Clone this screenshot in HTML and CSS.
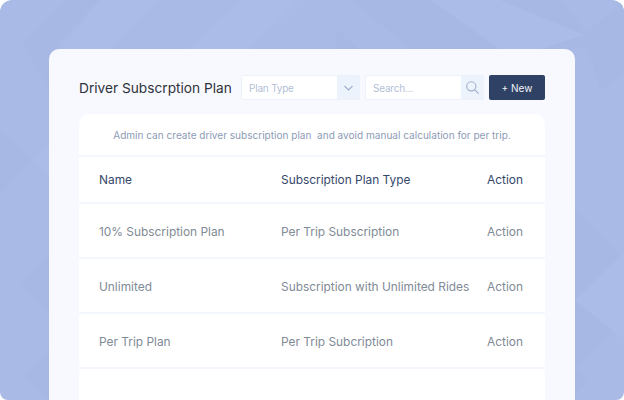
FILE: index.html
```html
<!DOCTYPE html>
<html lang="en">
<head>
<meta charset="utf-8">
<title>Driver Subscription Plan</title>
<link rel="stylesheet" href="styles.css">
</head>
<body>
<div class="page">
  <svg class="pattern" width="624" height="400" viewBox="0 0 624 400" aria-hidden="true">
    <g class="dark">
      <polygon points="23,43 66,0 100,0 57,43 100,86 66,120"/>
      <polygon points="352,0 430,0 500,49 410,49"/>
      <polygon points="500,0 560,0 600,49 545,49"/>
      <polygon points="335,49 337,30 358,49"/>
      <polygon points="584,35 624,0 624,75 600,90"/>
      <polygon points="620,255 575,210 575,300"/>
      <polygon points="614,330 575,290 575,370"/>
      <polygon points="588,382 575,368 575,396"/>
      <polygon points="20,284 49,255 49,313"/>
      <polygon points="23,376 49,350 49,400"/>
      <polygon points="0,130 33,160 0,195"/>
    </g>
    <g class="light">
      <polygon points="100,0 160,0 110,49 60,49"/>
      <polygon points="240,0 300,0 250,49 190,49"/>
      <polygon points="430,0 500,0 584,35 540,49 500,49"/>
      <polygon points="33,160 49,145 49,176"/>
      <polygon points="575,300 624,255 624,340"/>
    </g>
  </svg>
  <main class="card">
    <header class="toolbar">
      <h1 class="title">Driver Subscrption Plan</h1>
      <div class="field">
        <span class="field-text">Plan Type</span>
        <span class="addon">
          <svg width="9" height="6" viewBox="0 0 9 6"><path d="M.5 1l4 4 4-4" class="icon"/></svg>
        </span>
      </div>
      <div class="field">
        <span class="field-text">Search...</span>
        <span class="addon">
          <svg width="13" height="13" viewBox="0 0 13 13"><circle cx="5.3" cy="5.3" r="4.6" class="icon"/><path d="M8.6 8.6l4 4" class="icon"/></svg>
        </span>
      </div>
      <button class="new-btn" type="button">+ New</button>
    </header>
    <section class="panel">
      <p class="note">Admin can create driver subscription plan&nbsp; and avoid manual calculation for per trip.</p>
      <div class="row head">
        <span>Name</span><span>Subscription Plan Type</span><span>Action</span>
      </div>
      <div class="row">
        <span>10% Subscription Plan</span><span>Per Trip Subscription</span><span>Action</span>
      </div>
      <div class="row">
        <span>Unlimited</span><span>Subscription with Unlimited Rides</span><span>Action</span>
      </div>
      <div class="row">
        <span>Per Trip Plan</span><span>Per Trip Subcription</span><span>Action</span>
      </div>
    </section>
  </main>
</div>
</body>
</html>
```

FILE: styles.css
```css
* { box-sizing: border-box; }
html, body { margin: 0; background: #fff; }
body { font-family: "Inter", "Liberation Sans", sans-serif; }
.page {
  position: relative;
  width: 624px;
  height: 400px;
  overflow: hidden;
  background: #a9bae6;
  border-radius: 12px 12px 8px 8px;
  padding: 49px 49px 0;
}
.pattern { position: absolute; left: 0; top: 0; }
.dark polygon { fill: #a7b8e4; }
.light polygon { fill: #abbce8; }
.card {
  position: relative;
  width: 526px;
  height: 351px;
  background: #f7f9fe;
  border-radius: 10px 10px 0 0;
  padding: 26px 30px 0;
}
.toolbar { display: flex; align-items: center; height: 25px; }
.title {
  margin: 0 9px 0 0;
  width: 153px;
  font-size: 13.7px;
  font-weight: 400;
  color: #2f333b;
  white-space: nowrap;
}
.field {
  display: flex;
  width: 119px;
  height: 25px;
  margin-right: 5px;
  background: #fff;
  border: 1px solid #edf1fa;
  border-radius: 2px;
}
.field-text {
  flex: 1;
  padding-left: 7px;
  font-size: 10px;
  line-height: 24px;
  letter-spacing: -0.2px;
  color: #b3bfd8;
}
.addon {
  display: flex;
  align-items: center;
  justify-content: center;
  width: 22px;
  background: #edf3fd;
}
.icon { fill: none; stroke: #9fb0cb; stroke-width: 1.1; }
.new-btn {
  width: 56px;
  height: 25px;
  padding: 0;
  border: 0;
  border-radius: 2px;
  background: #2f4265;
  color: #eef1f7;
  font-family: inherit;
  font-size: 10px;
}
.panel {
  margin-top: 14px;
  height: 286px;
  background: #fff;
  border-radius: 10px 10px 0 0;
}
.note {
  margin: 0;
  height: 43px;
  border-bottom: 2px solid #f3f6fc;
  font-size: 10.05px;
  line-height: 42px;
  text-align: center;
  color: #8d9cb6;
}
.row {
  display: grid;
  grid-template-columns: 182px 206px 1fr;
  align-items: center;
  height: 55px;
  padding: 1px 0 0 20px;
  border-bottom: 2px solid #f3f6fc;
  font-size: 11.9px;
  color: #7f8b97;
}
.row.head { height: 47px; padding-top: 0; color: #35486b; }
```
